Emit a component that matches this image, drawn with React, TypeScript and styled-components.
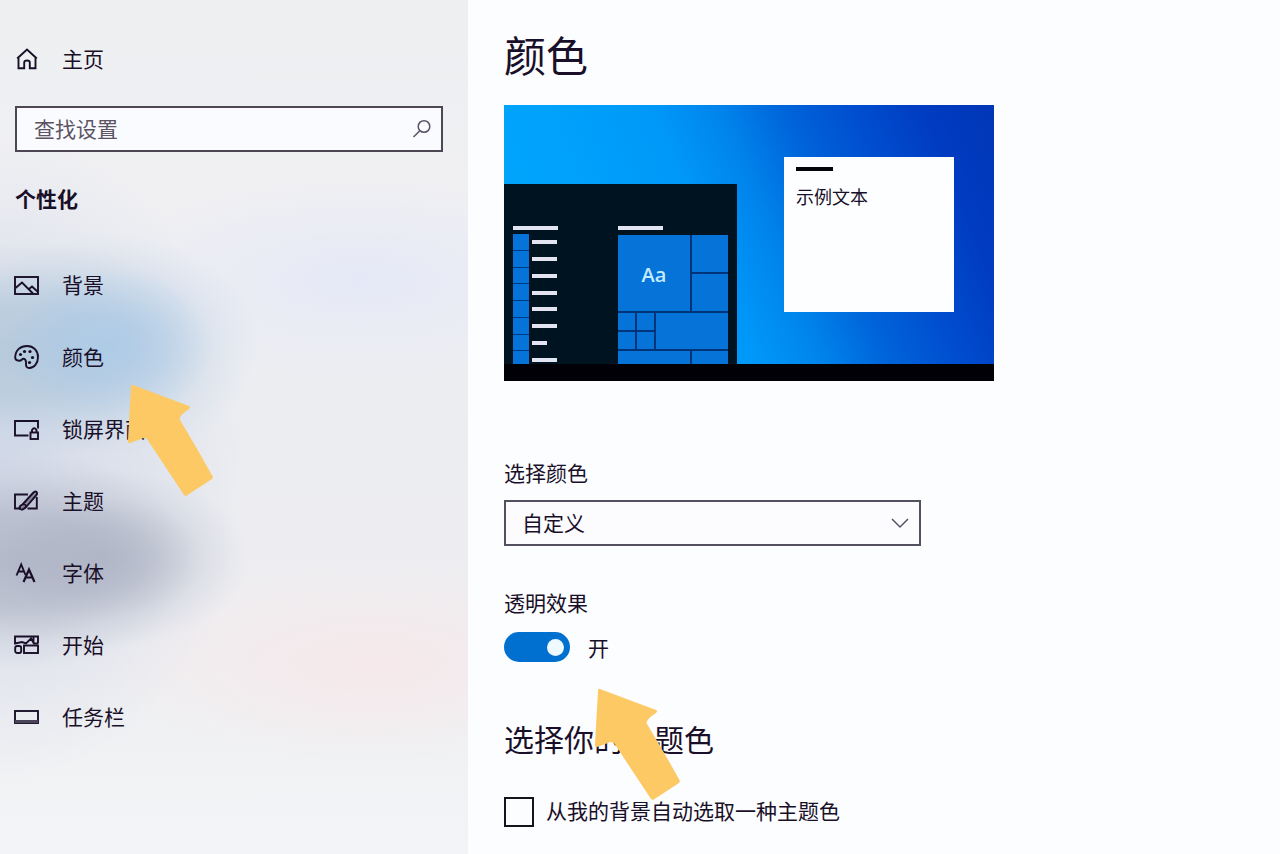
import React from "react";
import styled, { createGlobalStyle } from "styled-components";

const ink = "#190f28";
const accent = "#0573d8";

const GlobalStyle = createGlobalStyle`
  *, *::before, *::after { box-sizing: border-box; }
  body {
    margin: 0;
    background: #fcfdff;
    color: ${ink};
    font: 400 21px/28px "Noto Sans CJK SC", "Noto Sans", sans-serif;
  }
  h1, h2, p, ul { margin: 0; padding: 0; }
  ul { list-style: none; }
  button, input, select { font: inherit; color: inherit; }
`;

const Page = styled.div`
  display: grid;
  grid-template-columns: 468px minmax(0, 1fr);
  min-height: 100vh;
  overflow: hidden;
`;

const Sidebar = styled.aside`
  padding: 38px 25px 20px 0;
  background:
    radial-gradient(ellipse 150px 110px at 110px 345px, #aecbe6 0%, #aecbe6aa 35%, #bed3e644 70%, #c8d6e400 100%),
    radial-gradient(ellipse 190px 110px at 20px 350px, #b3c6d8 0%, #b3c6d8bb 40%, #bccede44 75%, #c8d6e400 100%),
    radial-gradient(ellipse 150px 90px at 100px 558px, #b0b6c6 0%, #b0b6c6aa 35%, #bcc2d044 70%, #c8ccd800 100%),
    radial-gradient(ellipse 180px 110px at 15px 560px, #b0b6c6 0%, #b0b6c6bb 40%, #bcc2d044 75%, #c8ccd800 100%),
    radial-gradient(ellipse 250px 320px at 0 460px, #d2d9e8 0%, #d8deeaaa 55%, #e4e8f000 100%),
    radial-gradient(ellipse 260px 100px at 370px 665px, #f6e9eb 0%, #f5eaeb88 50%, #f3eded00 100%),
    radial-gradient(ellipse 260px 100px at 360px 280px, #e5e9f7 0%, #e6e9f588 50%, #ebecf200 100%),
    linear-gradient(#edeff1 0%, #f0f0f3 22%, #ecedf1 50%, #efeef1 75%, #f0f2f4 90%, #f3f4f7 100%);
`;

const NavLink = styled.a<{ $height: number }>`
  display: flex;
  align-items: center;
  gap: 22px;
  height: ${(p) => p.$height}px;
  padding-left: 14px;
  color: inherit;
  text-decoration: none;

  svg { flex: none; }
`;

const NavLabel = styled.span`
  padding-bottom: 2px;
`;

const SearchBox = styled.form`
  display: flex;
  align-items: center;
  height: 46px;
  margin: 26px 0 0 15px;
  border: 2px solid #4c4655;
  background: #fafbfe;
`;

const SearchInput = styled.input`
  flex: 1;
  min-width: 0;
  height: 100%;
  padding: 0 0 3px 17px;
  border: 0;
  outline: 0;
  background: none;

  &::placeholder { color: #5c5464; opacity: 1; }
`;

const SearchButton = styled.button`
  display: flex;
  padding: 0 10px;
  border: 0;
  background: none;
`;

const GroupTitle = styled.h2`
  margin: 32px 0 37px 15px;
  font-size: 21px;
  font-weight: 700;
  line-height: 28px;
`;

const NavItem = styled.li`
  position: relative;
`;

const PointerArrow = styled.svg<{ $left: number; $top: number }>`
  position: absolute;
  z-index: 2;
  left: ${(p) => p.$left}px;
  top: ${(p) => p.$top}px;
  pointer-events: none;
`;

const Content = styled.main`
  padding: 26px 36px 28px;
`;

const Title = styled.h1`
  font-size: 42px;
  font-weight: 400;
  line-height: 56px;
`;

const Preview = styled.figure`
  display: flex;
  flex-direction: column;
  max-width: 490px;
  height: 276px;
  margin: 23px 0 77px;
  background: linear-gradient(68deg, #00a6fa 0%, #00a2fb 25%, #0098f8 43%, #0084ec 54%, #0064da 65%, #004fd0 76%, #003cc2 88%, #0036b6 100%);
`;

const Desktop = styled.div`
  flex: 1;
  display: flex;
  justify-content: space-between;
  min-height: 0;
`;

const Taskbar = styled.div`
  height: 17px;
  background: #000006;
`;

const StartPanel = styled.div`
  display: flex;
  align-self: flex-end;
  justify-content: space-between;
  width: 233px;
  height: 180px;
  padding: 42px 9px 0;
  overflow: hidden;
  background: #001320;
`;

const Bar = styled.div<{ $width: number; $color?: string }>`
  width: ${(p) => p.$width}px;
  height: 4px;
  background: ${(p) => p.$color ?? "#e2e4f2"};
`;

const AppList = styled.div`
  display: grid;
  grid-auto-rows: 1fr;
  height: 134px;
  margin-top: 4px;
`;

const AppRow = styled.div`
  display: flex;
  align-items: center;
  gap: 3px;

  &::before {
    content: "";
    width: 16px;
    height: 100%;
    border-bottom: 1px solid #003a85;
    background: ${accent};
  }
`;

const Tiles = styled.div`
  display: grid;
  grid-template-columns: 17px 17px 34px 36px;
  grid-template-rows: 37px 37px 17px 17px 13px;
  gap: 2px;
  margin-top: 5px;
  background: #003478;
`;

const Tile = styled.div<{ $area: string }>`
  grid-area: ${(p) => p.$area};
  display: grid;
  place-items: center;
  padding-top: 4px;
  background: ${accent};
  color: #c4ecff;
  font: 600 20px/28px "Open Sans", "Noto Sans", sans-serif;
`;

const SampleWindow = styled.div`
  width: 170px;
  height: 155px;
  margin: 52px 40px 0 0;
  padding: 10px 12px;
  background: #fdfeff;
`;

const SampleText = styled.p`
  margin-top: 11px;
  font-size: 18px;
  line-height: 28px;
`;

const FieldLabel = styled.label`
  display: block;
  width: fit-content;
`;

const SelectWrap = styled.div`
  position: relative;
  max-width: 417px;
  margin: 14px 0 42px;

  svg {
    position: absolute;
    right: 12px;
    top: 16px;
    pointer-events: none;
  }
`;

const Select = styled.select`
  display: block;
  width: 100%;
  height: 46px;
  padding: 0 40px 2px 16px;
  border: 2px solid #55505f;
  border-radius: 0;
  appearance: none;
  background: #fcfcff;
`;

const ToggleRow = styled.div`
  position: relative;
  display: flex;
  align-items: center;
  gap: 18px;
  width: fit-content;
  margin: 16px 0 56px;
`;

const Toggle = styled.input`
  appearance: none;
  display: flex;
  align-items: center;
  justify-content: flex-end;
  width: 66px;
  height: 30px;
  margin: 0;
  padding: 0 6px;
  border-radius: 15px;
  background: #0070d0;

  &::after {
    content: "";
    width: 17px;
    height: 17px;
    border-radius: 50%;
    background: #eefaff;
  }
`;

const ToggleState = styled.span`
  line-height: 30px;
`;

const SectionTitle = styled.h2`
  font-size: 30px;
  font-weight: 400;
  line-height: 40px;
`;

const CheckLabel = styled.label`
  display: flex;
  align-items: center;
  gap: 12px;
  width: fit-content;
  margin-top: 38px;
`;

const CheckBox = styled.input`
  appearance: none;
  width: 30px;
  height: 30px;
  margin: 0;
  border: 2px solid #17131e;
  background: #fcfdff;
`;

const CheckText = styled.span`
  padding-bottom: 4px;
`;

function Icon({ children }: { children: React.ReactNode }) {
  return (
    <svg width="26" height="26" viewBox="0 0 26 26" fill="none" stroke={ink} strokeWidth="1.9" aria-hidden="true">
      {children}
    </svg>
  );
}

const HomeIcon = () => (
  <Icon>
    <path d="M4.500 11.500V22.200H10.200V16.500Q10.200 14.500 13 14.500Q15.800 14.500 15.800 16.500V22.200H21.500V11.500M3.200 12.500L13 3.500L22.800 12.500" />
  </Icon>
);

const navItems = [
  {
    label: "背景",
    icon: (
      <Icon>
        <rect x="1" y="5" width="23" height="17" />
        <path d="M1.500 16L8 10.500L19 21.500M15 17L18 14.500L24 20" />
      </Icon>
    ),
  },
  {
    label: "颜色",
    icon: (
      <Icon>
        <path d="M1.200 13C1.500 6 6.500 2 13 2C19.500 2 24 6.800 24 13C24 19.500 20 24 15.500 24C12.500 24 11.800 22 12 19.800C12.200 17 11.500 14.800 9.500 14.800C7.500 14.800 7.800 17 5.200 16.800C2.500 16.600 1.100 15 1.200 13Z" />
        <g fill={ink} stroke="none">
          <circle cx="6.500" cy="10.500" r="1.600" />
          <circle cx="10.500" cy="7.500" r="1.600" />
          <circle cx="16" cy="7.500" r="1.600" />
          <circle cx="18.500" cy="13.500" r="1.600" />
          <circle cx="15.500" cy="18.500" r="1.600" />
        </g>
      </Icon>
    ),
  },
  {
    label: "锁屏界面",
    icon: (
      <Icon>
        <path d="M14.500 19.500H1V5H24V12.500" />
        <rect x="16.500" y="16.500" width="7.500" height="6.500" />
        <path d="M18 16.500V14Q20.200 10.500 22.500 14V16.500" />
      </Icon>
    ),
  },
  {
    label: "主题",
    icon: (
      <Icon>
        <path d="M14 6.500H1V20.500H7M13.500 20.500H22.800V9" />
        <path
          d="M8.500 16.500L19 5Q21 2.800 22.600 4Q23.800 5.500 22 7.500L12.500 18.500M8.500 16.500Q5 18 5.500 20.500Q8 23.500 12.500 18.500Q11.500 16 8.500 16.500Z"
          fill="#190f2855"
        />
      </Icon>
    ),
  },
  {
    label: "字体",
    icon: (
      <Icon>
        <path d="M2.500 15.500L7.200 4.500L11.500 15M4.500 11.500H9.500" />
        <path d="M9.500 22L15 9.500L20.500 22M11.500 17.500H18.500" strokeWidth="2.200" />
      </Icon>
    ),
  },
  {
    label: "开始",
    icon: (
      <Icon>
        <path d="M1 12.500V4.500H24V11.500M19.500 4.500V11.500M1 11.500L8 10L12 11.500L17 6.500L20 11.500H24" />
        <rect x="1.200" y="14" width="6" height="7" rx="2" />
        <rect x="10" y="13.500" width="14" height="7.500" />
      </Icon>
    ),
  },
  {
    label: "任务栏",
    icon: (
      <Icon>
        <rect x="1" y="7" width="23" height="12" />
        <path d="M1 17.500H24" stroke="#4b4458" strokeWidth="3" />
      </Icon>
    ),
  },
];

function Arrow({ left, top }: { left: number; top: number }) {
  return (
    <PointerArrow $left={left} $top={top} width="90" height="116" viewBox="-5 -2 90 116" aria-hidden="true">
      <path
        d="M2 0L58 21Q60 22 58 24Q47 31 49 35Q66 63 82 92L81 94L55 111L53 110L18 57Q15 51 10 54L-1 58Q-4 58 -3 55L0 2Q0 -1 2 0Z"
        fill="#fdc964"
      />
    </PointerArrow>
  );
}

const tileAreas = [
  "1 / 4 / 2 / 5",
  "2 / 4 / 3 / 5",
  "3 / 1 / 4 / 2",
  "3 / 2 / 4 / 3",
  "4 / 1 / 5 / 2",
  "4 / 2 / 5 / 3",
  "3 / 3 / 5 / 5",
  "5 / 1 / 6 / 4",
  "5 / 4 / 6 / 5",
];

const appBars = [25, 25, 25, 25, 25, 25, 15, 25];

export default function App() {
  return (
    <>
      <GlobalStyle />
      <Page>
        <Sidebar>
          <NavLink href="#home" $height={42}>
            <HomeIcon />
            <NavLabel>主页</NavLabel>
          </NavLink>
          <SearchBox role="search">
            <SearchInput type="search" placeholder="查找设置" aria-label="查找设置" />
            <SearchButton type="button" aria-label="搜索">
              <svg width="20" height="20" viewBox="0 0 20 20" fill="none" stroke="#5a5266" strokeWidth="1.500">
                <circle cx="13" cy="7.500" r="5.800" />
                <path d="M8.800 11.700L2.500 18" />
              </svg>
            </SearchButton>
          </SearchBox>
          <GroupTitle>个性化</GroupTitle>
          <nav aria-label="个性化">
            <ul>
              {navItems.map((item) => (
                <NavItem key={item.label}>
                  <NavLink href={`#${item.label}`} $height={72}>
                    {item.icon}
                    <NavLabel>{item.label}</NavLabel>
                  </NavLink>
                  {item.label === "颜色" && <Arrow left={126} top={62} />}
                </NavItem>
              ))}
            </ul>
          </nav>
        </Sidebar>

        <Content>
          <Title>颜色</Title>
          <Preview>
            <Desktop>
              <StartPanel>
                <div>
                  <Bar $width={45} />
                  <AppList>
                    {appBars.map((width, i) => (
                      <AppRow key={i}>
                        <Bar $width={width} />
                      </AppRow>
                    ))}
                  </AppList>
                </div>
                <div>
                  <Bar $width={45} />
                  <Tiles>
                    <Tile $area="1 / 1 / 3 / 4">Aa</Tile>
                    {tileAreas.map((area) => (
                      <Tile key={area} $area={area} />
                    ))}
                  </Tiles>
                </div>
              </StartPanel>
              <SampleWindow>
                <Bar $width={37} $color="#05030c" />
                <SampleText>示例文本</SampleText>
              </SampleWindow>
            </Desktop>
            <Taskbar />
          </Preview>

          <FieldLabel htmlFor="color-mode">选择颜色</FieldLabel>
          <SelectWrap>
            <Select id="color-mode" defaultValue="custom">
              <option value="custom">自定义</option>
            </Select>
            <svg width="18" height="14" viewBox="0 0 18 14" fill="none" stroke="#5a5266" strokeWidth="1.500" aria-hidden="true">
              <path d="M1 3L9 11L17 3" />
            </svg>
          </SelectWrap>

          <FieldLabel htmlFor="transparency">透明效果</FieldLabel>
          <ToggleRow>
            <Toggle id="transparency" type="checkbox" role="switch" defaultChecked />
            <ToggleState>开</ToggleState>
            <Arrow left={89} top={55} />
          </ToggleRow>

          <SectionTitle>选择你的主题色</SectionTitle>
          <CheckLabel>
            <CheckBox type="checkbox" />
            <CheckText>从我的背景自动选取一种主题色</CheckText>
          </CheckLabel>
        </Content>
      </Page>
    </>
  );
}
